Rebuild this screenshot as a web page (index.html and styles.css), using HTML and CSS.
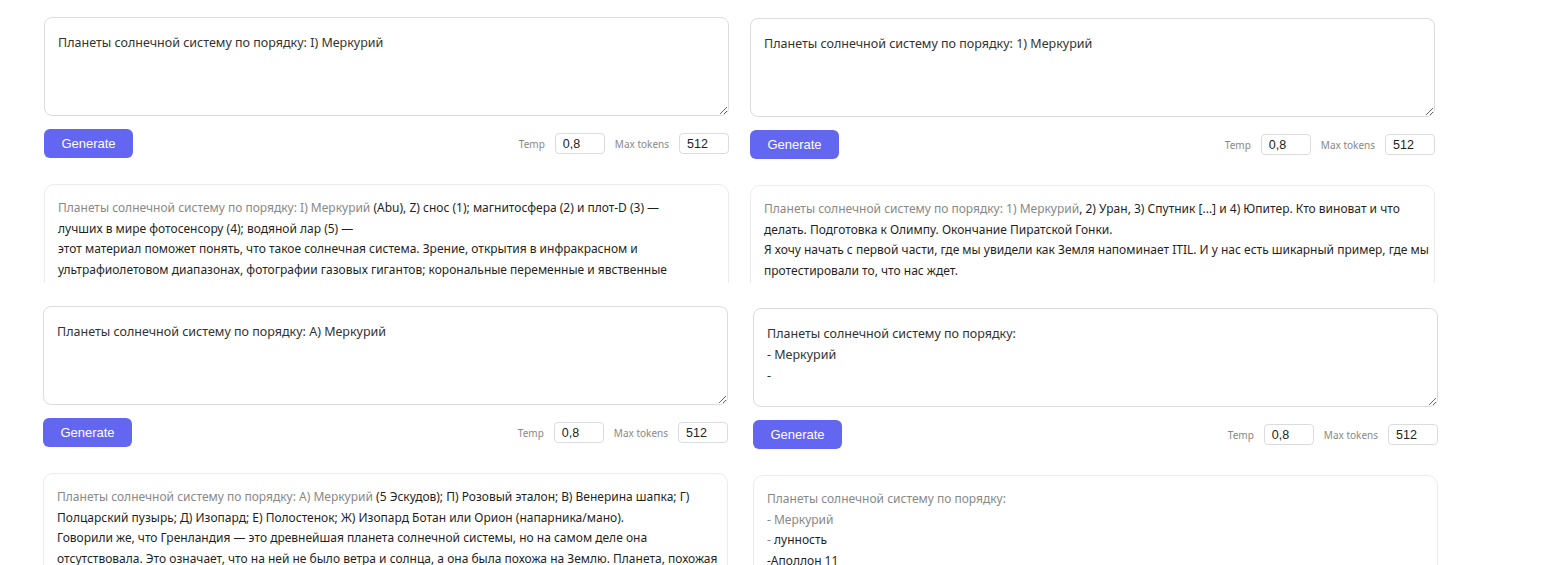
FILE: index.html
```html
<!DOCTYPE html>
<html lang="ru">
<head>
  <meta charset="UTF-8" />
  <meta name="viewport" content="width=device-width, initial-scale=1" />
  <title>Generate playground</title>
  <link rel="stylesheet" href="styles.css">
</head>
<body>
  <div class="board">

    <!-- Top left: "I)" prompt -->
    <section class="shot shot-a">
      <div class="panel">
        <textarea class="prompt">Планеты солнечной систему по порядку: I) Меркурий</textarea>
        <div class="controls">
          <button class="generate">Generate</button>
          <div class="params">
            <label>Temp</label>
            <input class="param" type="text" value="0,8" />
            <label>Max tokens</label>
            <input class="param" type="text" value="512" />
          </div>
        </div>
        <div class="output"><span class="given">Планеты солнечной систему по порядку: I) Меркурий</span> (Abu), Z) снос (1); магнитосфера (2) и плот-D (3) —
лучших в мире фотосенсору (4); водяной лар (5) —
этот материал поможет понять, что такое солнечная система. Зрение, открытия в инфракрасном и ультрафиолетовом диапазонах, фотографии газовых гигантов; корональные переменные и явственные последствия вспышек на поверхности звезды.</div>
      </div>
    </section>

    <!-- Top right: "1)" prompt -->
    <section class="shot shot-b">
      <div class="panel">
        <textarea class="prompt">Планеты солнечной систему по порядку: 1) Меркурий</textarea>
        <div class="controls">
          <button class="generate">Generate</button>
          <div class="params">
            <label>Temp</label>
            <input class="param" type="text" value="0,8" />
            <label>Max tokens</label>
            <input class="param" type="text" value="512" />
          </div>
        </div>
        <div class="output"><span class="given">Планеты солнечной систему по порядку: 1) Меркурий</span>, 2) Уран, 3) Спутник [...] и 4) Юпитер. Кто виноват и что делать. Подготовка к Олимпу. Окончание Пиратской Гонки.
Я хочу начать с первой части, где мы увидели как Земля напоминает ITIL. И у нас есть шикарный пример, где мы протестировали то, что нас ждет.
Дальше будет интереснее.</div>
      </div>
    </section>

    <!-- Bottom left: "А)" prompt -->
    <section class="shot shot-c">
      <div class="panel">
        <textarea class="prompt">Планеты солнечной систему по порядку: А) Меркурий</textarea>
        <div class="controls">
          <button class="generate">Generate</button>
          <div class="params">
            <label>Temp</label>
            <input class="param" type="text" value="0,8" />
            <label>Max tokens</label>
            <input class="param" type="text" value="512" />
          </div>
        </div>
        <div class="output"><span class="given">Планеты солнечной систему по порядку: А) Меркурий</span> (5 Эскудов); П) Розовый эталон; В) Венерина шапка; Г) Полцарский пузырь; Д) Изопард; Е) Полостенок; Ж) Изопард Ботан или Орион (напарника/мано).
Говорили же, что Гренландия — это древнейшая планета солнечной системы, но на самом деле она отсутствовала. Это означает, что на ней не было ветра и солнца, а она была похожа на Землю. Планета, похожая на Землю, всегда была рядом.</div>
      </div>
    </section>

    <!-- Bottom right: list prompt -->
    <section class="shot shot-d">
      <div class="panel">
        <textarea class="prompt">Планеты солнечной систему по порядку:
- Меркурий
-</textarea>
        <div class="controls">
          <button class="generate">Generate</button>
          <div class="params">
            <label>Temp</label>
            <input class="param" type="text" value="0,8" />
            <label>Max tokens</label>
            <input class="param" type="text" value="512" />
          </div>
        </div>
        <div class="output"><span class="given">Планеты солнечной систему по порядку:
- Меркурий
-</span> лунность
-Аполлон 11
-Луна-2</div>
      </div>
    </section>

  </div>
</body>
</html>
```

FILE: styles.css
```css
body {
  margin: 0;
  background: #fff;
  font-family: "Noto Sans", "Open Sans", sans-serif;
  color: #333;
}
.board {
  display: grid;
  grid-template-columns: 740px 1fr;
  grid-template-rows: 283px 282px;
  height: 565px;
  overflow: hidden;
}
.shot {
  overflow: hidden;
  box-sizing: border-box;
}
.shot-a { padding: 17px 0 0 44px; }
.shot-b { padding: 18px 0 0 10px; }
.shot-c { padding: 23px 0 0 43px; }
.shot-d { padding: 25px 0 0 13px; }

.panel {
  width: 685px;
}
.prompt {
  display: block;
  width: 100%;
  height: 99px;
  box-sizing: border-box;
  margin: 0;
  padding: 14px 13px;
  border: 1px solid #dcdcdc;
  border-radius: 8px;
  font-family: inherit;
  font-size: 12.5px;
  line-height: 21px;
  color: #333;
  resize: vertical;
  outline: none;
}
.controls {
  display: flex;
  align-items: center;
  justify-content: space-between;
  margin-top: 13px;
}
.generate {
  width: 89px;
  height: 29px;
  border: none;
  border-radius: 6px;
  background: #6366f1;
  color: #fff;
  font-family: "Liberation Sans", Arial, sans-serif;
  font-size: 13px;
  cursor: pointer;
}
.params {
  display: flex;
  align-items: center;
}
.params label {
  font-size: 10px;
  color: #888;
  margin-right: 10px;
}
.param {
  width: 50px;
  height: 21px;
  box-sizing: border-box;
  padding: 0 7px;
  margin-right: 10px;
  border: 1px solid #dcdcdc;
  border-radius: 4px;
  font-family: "Liberation Sans", Arial, sans-serif;
  font-size: 12.5px;
  color: #222;
}
.param:last-child {
  margin-right: 0;
}
.output {
  margin-top: 26px;
  padding: 13px 2px 13px 13px;
  border: 1px solid #ececec;
  border-radius: 10px;
  font-size: 12px;
  line-height: 20.5px;
  color: #1f1f1f;
  white-space: pre-line;
}
.output .given {
  color: #888;
}
```
